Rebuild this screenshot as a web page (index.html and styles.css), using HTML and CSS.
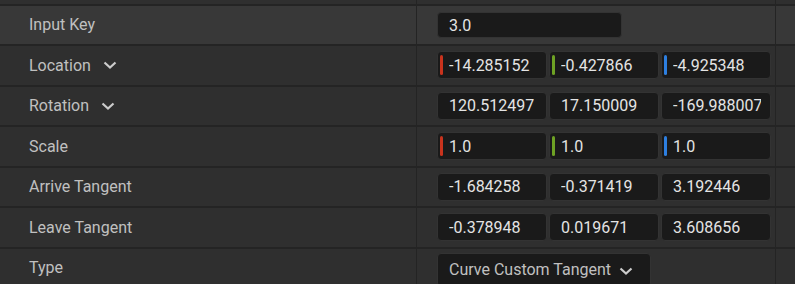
FILE: index.html
```html
<!DOCTYPE html>
<html lang="en">
<head>
  <meta charset="UTF-8" />
  <title>Spline Point Details</title>
  <link rel="stylesheet" href="styles.css">
</head>
<body>
  <div class="panel">
    <div class="row top-edge">
      <div class="name"></div>
      <div class="value"></div>
      <div class="gutter"></div>
    </div>

    <div class="row active">
      <div class="name">Input Key</div>
      <div class="value">
        <div class="field key"><span class="num">3.0</span></div>
      </div>
      <div class="gutter"></div>
    </div>

    <div class="row">
      <div class="name">Location <svg class="chevron" viewBox="0 0 14 8"><path d="M1.5 1.5l5.5 5 5.5-5"/></svg></div>
      <div class="value">
        <div class="field axis x"><span class="num">-14.285152</span></div>
        <div class="field axis y"><span class="num">-0.427866</span></div>
        <div class="field axis z"><span class="num">-4.925348</span></div>
      </div>
      <div class="gutter"></div>
    </div>

    <div class="row">
      <div class="name">Rotation <svg class="chevron" viewBox="0 0 14 8"><path d="M1.5 1.5l5.5 5 5.5-5"/></svg></div>
      <div class="value">
        <div class="field"><span class="num">120.512497</span></div>
        <div class="field"><span class="num">17.150009</span></div>
        <div class="field"><span class="num">-169.988007</span></div>
      </div>
      <div class="gutter"></div>
    </div>

    <div class="row">
      <div class="name">Scale</div>
      <div class="value">
        <div class="field axis x"><span class="num">1.0</span></div>
        <div class="field axis y"><span class="num">1.0</span></div>
        <div class="field axis z"><span class="num">1.0</span></div>
      </div>
      <div class="gutter"></div>
    </div>

    <div class="row">
      <div class="name">Arrive Tangent</div>
      <div class="value">
        <div class="field"><span class="num">-1.684258</span></div>
        <div class="field"><span class="num">-0.371419</span></div>
        <div class="field"><span class="num">3.192446</span></div>
      </div>
      <div class="gutter"></div>
    </div>

    <div class="row">
      <div class="name">Leave Tangent</div>
      <div class="value">
        <div class="field"><span class="num">-0.378948</span></div>
        <div class="field"><span class="num">0.019671</span></div>
        <div class="field"><span class="num">3.608656</span></div>
      </div>
      <div class="gutter"></div>
    </div>

    <div class="row">
      <div class="name">Type</div>
      <div class="value">
        <div class="combo">Curve Custom Tangent <svg class="chevron" viewBox="0 0 14 8"><path d="M1.5 1.5l5.5 5 5.5-5"/></svg></div>
      </div>
      <div class="gutter"></div>
    </div>
  </div>
</body>
</html>
```

FILE: styles.css
```css
html,
body {
  margin: 0;
  height: 100%;
  overflow: hidden;
  background-color: #242424;
}

body {
  font-family: Roboto, "Liberation Sans", sans-serif;
  font-size: 16px;
}

.panel {
  display: flex;
  flex-direction: column;
  gap: 2px;
}

.row {
  display: flex;
  height: 38.5px;
  flex-shrink: 0;
  background-color: #2f2f2f;
}

.row.top-edge {
  height: 3.5px;
}

.row.active {
  background-color: #383838;
}

.name {
  width: 416px;
  flex-shrink: 0;
  box-sizing: border-box;
  padding-left: 29px;
  display: flex;
  align-items: center;
  color: #c0c0c0;
}

.value {
  width: 359px;
  flex-shrink: 0;
  box-sizing: border-box;
  border-left: 1px solid #242424;
  padding-left: 20px;
  display: flex;
  align-items: center;
  gap: 2px;
}

.gutter {
  flex: 1;
  border-left: 1px solid #242424;
}

.chevron {
  width: 14px;
  height: 8px;
  margin-left: 12px;
  fill: none;
  stroke: #cccccc;
  stroke-width: 2.2;
}

.field {
  position: relative;
  width: 110px;
  height: 28px;
  box-sizing: border-box;
  background-color: #1a1a1a;
  border: 1px solid #333333;
  border-radius: 4px;
  padding: 0 9px 0 11px;
  display: flex;
  align-items: center;
  color: #e4e4e4;
}

.num {
  min-width: 0;
  overflow: hidden;
  white-space: nowrap;
}

.field.key {
  width: 185px;
  height: 26px;
  margin-top: 1px;
}

.field.axis::before {
  content: "";
  position: absolute;
  left: 2px;
  top: 3px;
  bottom: 3px;
  width: 3px;
  border-radius: 2px;
}

.field.x::before {
  background-color: #c9331d;
}

.field.y::before {
  background-color: #6ea224;
}

.field.z::before {
  background-color: #2d7fe0;
}

.combo {
  align-self: flex-start;
  margin-top: 4px;
  width: 214px;
  height: 34px;
  box-sizing: border-box;
  background-color: #1a1a1a;
  border: 1px solid #333333;
  border-radius: 4px;
  padding: 6px 0 0 11px;
  display: flex;
  align-items: flex-start;
  color: #c0c0c0;
  white-space: nowrap;
}

.combo .chevron {
  margin-left: 8px;
  margin-top: 7px;
}
```
